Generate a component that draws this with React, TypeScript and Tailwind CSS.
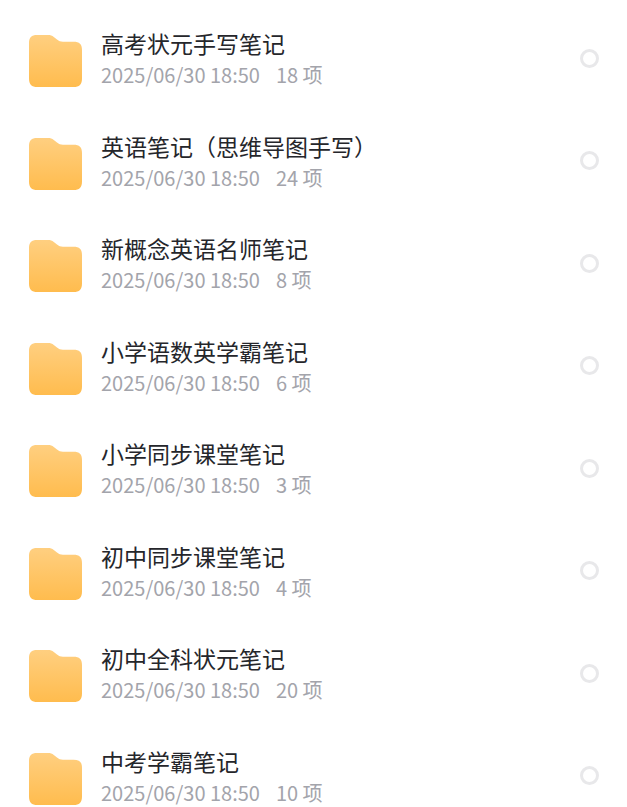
import React, { useState } from 'react';

interface Folder {
    name: string;
    date: string;
    count: number;
}

const FOLDERS: Folder[] = [
    { name: '高考状元手写笔记', date: '2025/06/30 18:50', count: 18 },
    { name: '英语笔记（思维导图手写）', date: '2025/06/30 18:50', count: 24 },
    { name: '新概念英语名师笔记', date: '2025/06/30 18:50', count: 8 },
    { name: '小学语数英学霸笔记', date: '2025/06/30 18:50', count: 6 },
    { name: '小学同步课堂笔记', date: '2025/06/30 18:50', count: 3 },
    { name: '初中同步课堂笔记', date: '2025/06/30 18:50', count: 4 },
    { name: '初中全科状元笔记', date: '2025/06/30 18:50', count: 20 },
    { name: '中考学霸笔记', date: '2025/06/30 18:50', count: 10 },
];

const FolderIcon: React.FC = () => (
    <svg className="w-[53px] h-[52px] shrink-0" viewBox="0 0 53 52" aria-hidden="true">
        <defs>
            <linearGradient id="folder-fill" x1="0" y1="0" x2="0" y2="1">
                <stop offset="0" stopColor="#ffcf80" />
                <stop offset="1" stopColor="#ffbc4e" />
            </linearGradient>
        </defs>
        <path
            d="M8 0H19C21.500 0 23 .6 24.800 2L28 4.600C30 6.200 31.500 6.700 34 6.700H44.500C50.500 6.700 53 9 53 15V43.500C53 49.500 50.500 52 44.500 52H8.500C2.500 52 0 49.500 0 43.500V8C0 2.500 2.500 0 8 0Z"
            fill="url(#folder-fill)"
        />
    </svg>
);

const App: React.FC = () => {
    const [selected, setSelected] = useState<string[]>([]);

    const toggle = (name: string) => {
        setSelected(prev => (prev.includes(name) ? prev.filter(n => n !== name) : [...prev, name]));
    };

    return (
        <main className="min-h-screen bg-white pt-[10px] font-['Noto_Sans_CJK_SC',sans-serif]">
            <ul>
                {FOLDERS.map(folder => (
                    <li key={folder.name} className="odd:h-[102px] even:h-[103px]">
                        <label className="flex items-center h-full pl-[29px] pr-7 cursor-pointer">
                            <FolderIcon />
                            <div className="flex-1 min-w-0 ml-[19px] pb-1">
                                <div className="text-[23px] leading-8 text-[#25262b] truncate">{folder.name}</div>
                                <div className="flex gap-4 text-[20px] leading-8 text-[#a3a4ab]">
                                    <span>{folder.date}</span>
                                    <span>{folder.count} 项</span>
                                </div>
                            </div>
                            <input
                                type="checkbox"
                                checked={selected.includes(folder.name)}
                                onChange={() => toggle(folder.name)}
                                className="appearance-none w-[19px] h-[19px] mb-1.5 shrink-0 rounded-full border-3 border-[#e8e8ea] checked:border-[#ffbd4f] checked:bg-[#ffbd4f]"
                            />
                        </label>
                    </li>
                ))}
            </ul>
        </main>
    );
};

export default App;
